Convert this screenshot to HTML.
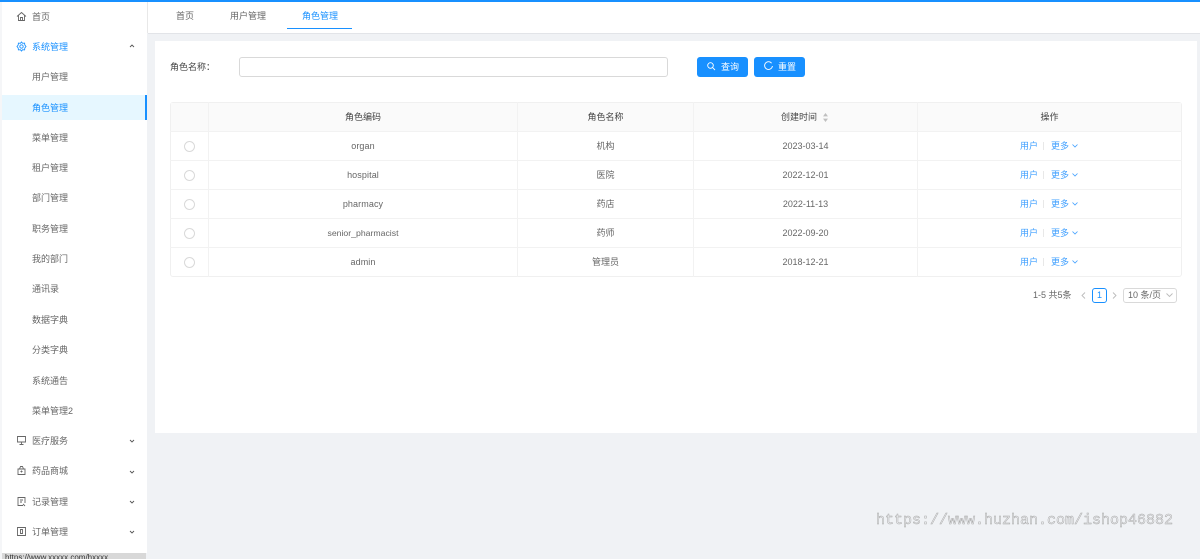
<!DOCTYPE html>
<html lang="zh"><head><meta charset="utf-8"><title>角色管理</title>
<style>
html,body{margin:0;padding:0;width:1200px;height:559px;overflow:hidden;background:#f0f2f5}
body{position:relative;font-family:"Liberation Sans","Noto Sans CJK SC",sans-serif;font-size:9px;color:#666}
#w{position:absolute;left:0;top:0;width:1200px;height:559px;overflow:hidden;background:#f0f2f5;filter:blur(.35px)}
.a,.t,.c{position:absolute}
.t{white-space:nowrap;line-height:12px}
.c{white-space:nowrap;line-height:12px;text-align:center}
svg{position:absolute;overflow:visible;fill:none}
.l{background:#f2f2f2;position:absolute}
.blue{color:#1890ff}
.h{color:#444}
</style></head><body><div id="w">
<div class="a" style="left:2px;top:0;width:145px;height:553px;background:#fff"></div>
<div class="a" style="left:0;top:0;width:2px;height:559px;background:#f5f6f8"></div>
<div class="a" style="left:2px;top:553px;width:144px;height:6px;background:#d8d8d8;overflow:hidden;color:#333;font-size:8px;line-height:10px;white-space:nowrap;padding-left:3px;box-sizing:border-box">https://www.xxxxx.com/hxxxx</div>
<div class="a" style="left:148px;top:1px;width:1052px;height:32px;background:#fff;border-bottom:1px solid #e2e4e8"></div>
<div class="a" style="left:147px;top:0;width:1px;height:33px;background:#e8e8e8"></div>
<div class="a" style="left:0;top:0;width:1200px;height:1.5px;background:#1890ff"></div>

<!-- Sidebar -->
<div class="t" style="left:32px;top:11px">首页</div>
<div class="t blue" style="left:32px;top:41px">系统管理</div>
<div class="t" style="left:32px;top:71px">用户管理</div>
<div class="a" style="left:2px;top:95px;width:145px;height:25px;background:#e6f7ff"></div>
<div class="a" style="left:145px;top:95px;width:2px;height:25px;background:#1890ff"></div>
<div class="t blue" style="left:32px;top:102px">角色管理</div>
<div class="t" style="left:32px;top:132px">菜单管理</div>
<div class="t" style="left:32px;top:162px">租户管理</div>
<div class="t" style="left:32px;top:192px">部门管理</div>
<div class="t" style="left:32px;top:223px">职务管理</div>
<div class="t" style="left:32px;top:253px">我的部门</div>
<div class="t" style="left:32px;top:283px">通讯录</div>
<div class="t" style="left:32px;top:314px">数据字典</div>
<div class="t" style="left:32px;top:344px">分类字典</div>
<div class="t" style="left:32px;top:375px">系统通告</div>
<div class="t" style="left:32px;top:405px">菜单管理2</div>
<div class="t" style="left:32px;top:435px">医疗服务</div>
<div class="t" style="left:32px;top:465px">药品商城</div>
<div class="t" style="left:32px;top:496px">记录管理</div>
<div class="t" style="left:32px;top:526px">订单管理</div>

<!-- Sidebar icons -->
<svg style="left:17px;top:12px" width="9" height="9" stroke="#666" stroke-width=".9"><path d="M0 4.5L4.5 .5L9 4.5M1.5 3.5V8.5H7.5V3.5M3.5 8.5V5.5H5.5V8.5"/></svg>
<svg style="left:17px;top:42px" width="9" height="9" stroke="#1890ff" stroke-width=".9"><path d="M4.5 0L5.6 1.3L7.6 1.1L7.8 3L9 4.5L7.8 6L7.6 7.9L5.6 7.7L4.5 9L3.4 7.7L1.4 7.9L1.2 6L0 4.5L1.2 3L1.4 1.1L3.4 1.3Z"/><circle cx="4.5" cy="4.5" r="1.7"/></svg>
<svg style="left:129px;top:44px" width="6" height="4" stroke="#555" stroke-width=".9"><path d="M1 3L3 1L5 3"/></svg>
<svg style="left:17px;top:436px" width="9" height="9" stroke="#666" stroke-width=".9"><path d="M.5 .5H8.5V6H.5ZM2.5 8.5H6.5M4.5 6V8.5"/></svg>
<svg style="left:17px;top:466px" width="9" height="9" stroke="#666" stroke-width=".9"><path d="M1 3H8V8.5H1ZM2.5 3L3.5 .5H5.5L6.5 3"/><path d="M3.5 5.5H5.5M4.5 4.5V6.5"/></svg>
<svg style="left:17px;top:497px" width="9" height="10" stroke="#666" stroke-width=".9"><path d="M6 8.5H1V.5H8V6M3 3H6M3 5H5M6 7L8 9"/></svg>
<svg style="left:17px;top:527px" width="9" height="9" stroke="#666" stroke-width=".9"><path d="M.5 .5H8.5V8.5H.5ZM3.5 2.5H5.5V6.5H3.5Z"/></svg>
<svg style="left:129px;top:439px" width="6" height="4" stroke="#555" stroke-width=".9"><path d="M1 1L3 3L5 1"/></svg>
<svg style="left:129px;top:470px" width="6" height="4" stroke="#555" stroke-width=".9"><path d="M1 1L3 3L5 1"/></svg>
<svg style="left:129px;top:500px" width="6" height="4" stroke="#555" stroke-width=".9"><path d="M1 1L3 3L5 1"/></svg>
<svg style="left:129px;top:530px" width="6" height="4" stroke="#555" stroke-width=".9"><path d="M1 1L3 3L5 1"/></svg>

<!-- Tabs -->
<div class="t" style="left:176px;top:10px">首页</div>
<div class="t" style="left:230px;top:10px">用户管理</div>
<div class="t blue" style="left:302px;top:10px">角色管理</div>
<div class="a" style="left:287px;top:28px;width:65px;height:1px;background:#1890ff"></div>

<!-- Content -->
<div class="a" style="left:155px;top:41px;width:1042px;height:392px;background:#fff"></div>
<div class="t" style="left:170px;top:61px;color:#444">角色名称：</div>
<div class="a" style="left:239px;top:57px;width:429px;height:20px;box-sizing:border-box;border:1px solid #d9d9d9;border-radius:3px;background:#fff"></div>
<div class="a" style="left:697px;top:57px;width:51px;height:20px;background:#1890ff;border-radius:3px"></div>
<div class="t" style="left:721px;top:61px;color:#fff">查询</div>
<svg style="left:707px;top:62px" width="9" height="9" stroke="#fff" stroke-width=".9"><circle cx="3.5" cy="3.5" r="2.8"/><path d="M5.6 5.6L8 8"/></svg>
<div class="a" style="left:754px;top:57px;width:51px;height:20px;background:#1890ff;border-radius:3px"></div>
<div class="t" style="left:778px;top:61px;color:#fff">重置</div>
<svg style="left:764px;top:61px" width="9" height="9" stroke="#fff" stroke-width=".9"><path d="M7.6 2.2A3.9 3.9 0 1 0 8.4 5"/></svg>

<!-- Table -->
<div class="a" style="left:170px;top:102px;width:1012px;height:175px;box-sizing:border-box;border:1px solid #f0f0f0;border-radius:3px"></div>
<div class="a" style="left:171px;top:103px;width:1010px;height:28px;background:#fafafa"></div>
<div class="l" style="left:170px;top:131px;width:1012px;height:1px"></div>
<div class="l" style="left:170px;top:160px;width:1012px;height:1px"></div>
<div class="l" style="left:170px;top:189px;width:1012px;height:1px"></div>
<div class="l" style="left:170px;top:218px;width:1012px;height:1px"></div>
<div class="l" style="left:170px;top:247px;width:1012px;height:1px"></div>
<div class="l" style="left:208px;top:102px;width:1px;height:175px"></div>
<div class="l" style="left:517px;top:102px;width:1px;height:175px"></div>
<div class="l" style="left:693px;top:102px;width:1px;height:175px"></div>
<div class="l" style="left:917px;top:102px;width:1px;height:175px"></div>

<div class="c h" style="left:209px;top:111px;width:308px">角色编码</div>
<div class="c h" style="left:518px;top:111px;width:175px">角色名称</div>
<div class="t h" style="left:781px;top:111px">创建时间</div>
<svg style="left:823px;top:113px" width="5" height="9"><path d="M2.5 0L5 3.4H0Z" fill="#bfbfbf"/><path d="M2.5 9L5 5.6H0Z" fill="#bfbfbf"/></svg>
<div class="c h" style="left:918px;top:111px;width:263px">操作</div>

<!-- Row 1 -->
<div class="a" style="left:184px;top:141px;width:11px;height:11px;box-sizing:border-box;border:1px solid #d9d9d9;border-radius:50%"></div>
<div class="c" style="left:209px;top:140px;width:308px;letter-spacing:.1px">organ</div>
<div class="c" style="left:518px;top:140px;width:175px">机构</div>
<div class="c" style="left:694px;top:140px;width:223px">2023-03-14</div>
<div class="t" style="left:1020px;top:140px;color:#40a0ff">用户</div>
<div class="a" style="left:1043px;top:142px;width:1px;height:8px;background:#e8e8e8"></div>
<div class="t" style="left:1051px;top:140px;color:#40a0ff">更多</div>
<svg style="left:1072px;top:144px" width="6" height="4" stroke="#40a0ff" stroke-width=".8"><path d="M.5 .5L3 3L5.5 .5"/></svg>
<!-- Row 2 -->
<div class="a" style="left:184px;top:170px;width:11px;height:11px;box-sizing:border-box;border:1px solid #d9d9d9;border-radius:50%"></div>
<div class="c" style="left:209px;top:169px;width:308px;letter-spacing:.1px">hospital</div>
<div class="c" style="left:518px;top:169px;width:175px">医院</div>
<div class="c" style="left:694px;top:169px;width:223px">2022-12-01</div>
<div class="t" style="left:1020px;top:169px;color:#40a0ff">用户</div>
<div class="a" style="left:1043px;top:171px;width:1px;height:8px;background:#e8e8e8"></div>
<div class="t" style="left:1051px;top:169px;color:#40a0ff">更多</div>
<svg style="left:1072px;top:173px" width="6" height="4" stroke="#40a0ff" stroke-width=".8"><path d="M.5 .5L3 3L5.5 .5"/></svg>
<!-- Row 3 -->
<div class="a" style="left:184px;top:199px;width:11px;height:11px;box-sizing:border-box;border:1px solid #d9d9d9;border-radius:50%"></div>
<div class="c" style="left:209px;top:198px;width:308px;letter-spacing:.1px">pharmacy</div>
<div class="c" style="left:518px;top:198px;width:175px">药店</div>
<div class="c" style="left:694px;top:198px;width:223px">2022-11-13</div>
<div class="t" style="left:1020px;top:198px;color:#40a0ff">用户</div>
<div class="a" style="left:1043px;top:200px;width:1px;height:8px;background:#e8e8e8"></div>
<div class="t" style="left:1051px;top:198px;color:#40a0ff">更多</div>
<svg style="left:1072px;top:202px" width="6" height="4" stroke="#40a0ff" stroke-width=".8"><path d="M.5 .5L3 3L5.5 .5"/></svg>
<!-- Row 4 -->
<div class="a" style="left:184px;top:228px;width:11px;height:11px;box-sizing:border-box;border:1px solid #d9d9d9;border-radius:50%"></div>
<div class="c" style="left:209px;top:227px;width:308px;font-size:8.7px">senior_pharmacist</div>
<div class="c" style="left:518px;top:227px;width:175px">药师</div>
<div class="c" style="left:694px;top:227px;width:223px">2022-09-20</div>
<div class="t" style="left:1020px;top:227px;color:#40a0ff">用户</div>
<div class="a" style="left:1043px;top:229px;width:1px;height:8px;background:#e8e8e8"></div>
<div class="t" style="left:1051px;top:227px;color:#40a0ff">更多</div>
<svg style="left:1072px;top:231px" width="6" height="4" stroke="#40a0ff" stroke-width=".8"><path d="M.5 .5L3 3L5.5 .5"/></svg>
<!-- Row 5 -->
<div class="a" style="left:184px;top:257px;width:11px;height:11px;box-sizing:border-box;border:1px solid #d9d9d9;border-radius:50%"></div>
<div class="c" style="left:209px;top:256px;width:308px;letter-spacing:.1px">admin</div>
<div class="c" style="left:518px;top:256px;width:175px">管理员</div>
<div class="c" style="left:694px;top:256px;width:223px">2018-12-21</div>
<div class="t" style="left:1020px;top:256px;color:#40a0ff">用户</div>
<div class="a" style="left:1043px;top:258px;width:1px;height:8px;background:#e8e8e8"></div>
<div class="t" style="left:1051px;top:256px;color:#40a0ff">更多</div>
<svg style="left:1072px;top:260px" width="6" height="4" stroke="#40a0ff" stroke-width=".8"><path d="M.5 .5L3 3L5.5 .5"/></svg>

<!-- Pagination -->
<div class="t" style="left:1033px;top:289px">1-5 共5条</div>
<svg style="left:1081px;top:292px" width="5" height="7" stroke="#bbb" stroke-width=".9"><path d="M4 .5L1 3.5L4 6.5"/></svg>
<div class="a" style="left:1092px;top:288px;width:15px;height:15px;box-sizing:border-box;border:1px solid #1890ff;border-radius:3px;color:#1890ff;text-align:center;line-height:13px">1</div>
<svg style="left:1112px;top:292px" width="5" height="7" stroke="#bbb" stroke-width=".9"><path d="M1 .5L4 3.5L1 6.5"/></svg>
<div class="a" style="left:1123px;top:288px;width:54px;height:15px;box-sizing:border-box;border:1px solid #d9d9d9;border-radius:3px"></div>
<div class="t" style="left:1128px;top:289px">10 条/页</div>
<svg style="left:1166px;top:293px" width="7" height="5" stroke="#bbb" stroke-width=".9"><path d="M.5 .5L3.5 3.5L6.5 .5"/></svg>

<!-- Watermark -->
<div class="t" style="left:876px;top:511px;font-family:'Liberation Mono','DejaVu Sans Mono',monospace;font-size:15px;line-height:20px;color:#f0f2f5;-webkit-text-stroke:.5px #a8a8a8">https://www.huzhan.com/ishop46882</div>
</div></body></html>
